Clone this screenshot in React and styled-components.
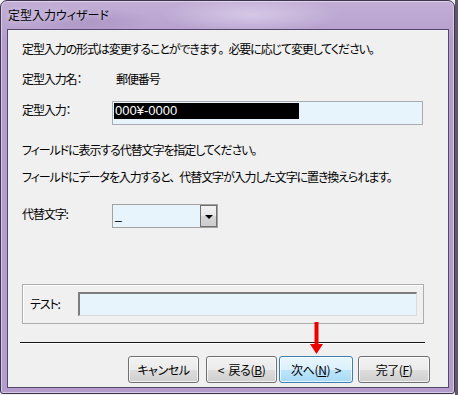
import React from 'react'
import styled, { createGlobalStyle } from 'styled-components'

const GlobalStyle = createGlobalStyle`
  html, body {
    margin: 0;
    padding: 0;
  }
  body {
    width: 458px;
    height: 395px;
    overflow: hidden;
    background: linear-gradient(to right, #f2f2f2 455px, #5f5a68 455px);
    font-family: "Noto Sans CJK JP", "Noto Sans", sans-serif;
    font-size: 12px;
    font-feature-settings: "palt";
    color: #000;
  }
`

const Window = styled.div`
  position: relative;
  box-sizing: border-box;
  width: 455px;
  height: 394px;
  border: 1px solid #3f3350;
  border-radius: 7px 7px 3px 3px;
  background:
    radial-gradient(ellipse 90px 18px at 250px 14px, rgba(235, 225, 245, 0.55), transparent),
    radial-gradient(ellipse 60px 14px at 90px 20px, rgba(150, 125, 175, 0.35), transparent),
    linear-gradient(180deg, rgba(255, 255, 255, 0.18), rgba(255, 255, 255, 0) 40px),
    #b49dcd;
  box-shadow: inset 0 0 0 1px rgba(255, 255, 255, 0.45);
  display: flex;
  flex-direction: column;
`

const TitleBar = styled.div`
  height: 28px;
  line-height: 28px;
  padding-left: 7px;
  font-size: 12px;
  color: #000;
  text-shadow: 0 0 6px rgba(255, 255, 255, 0.7);
`

const Panel = styled.div`
  flex: 1;
  margin: 0 5px 5px 6px;
  border: 1px solid #54486a;
  background: #f0f0f0;
  display: flex;
  flex-direction: column;
  padding-left: 14px;
  letter-spacing: -1.1px;
`

const Line = styled.div`
  margin-top: ${p => p.$top}px;
  height: 16px;
  line-height: 16px;
  white-space: nowrap;
  display: flex;
`

const Punct = styled.span`
  margin-right: 5px;
`

const Label = styled.span`
  display: inline-block;
  width: ${p => p.$width}px;
  flex-shrink: 0;
  padding-top: ${p => p.$pad || 0}px;
  line-height: 16px;
`

const FieldRow = styled.div`
  margin-top: ${p => p.$top}px;
  height: 24px;
  display: flex;
  align-items: flex-start;
`

const TextBox = styled.div`
  box-sizing: border-box;
  width: ${p => p.$width}px;
  height: 24px;
  border: 1px solid #a9abb3;
  background: #e7f4fc;
  padding: 1px 1px;
  display: flex;
`

const Selected = styled.span`
  display: inline-block;
  width: 184px;
  height: 16px;
  line-height: 16px;
  background: #000;
  color: #fff;
  padding-left: 1px;
  letter-spacing: 0;
  font-family: "Liberation Sans", "Noto Sans CJK JP", sans-serif;
  font-size: 13px;
`

const Combo = styled.div`
  box-sizing: border-box;
  width: 106px;
  height: 24px;
  border: 1px solid #a2a2a2;
  background: #e7f4fc;
  display: flex;
  align-items: stretch;
`

const ComboValue = styled.span`
  flex: 1;
  padding-left: 2px;
  line-height: 20px;
  font-family: "Liberation Sans", sans-serif;
`

const DropButton = styled.span`
  box-sizing: border-box;
  width: 17px;
  border: 1px solid #6f6f6f;
  background: linear-gradient(180deg, #f3f3f3 0%, #e6e6e6 50%, #d4d4d4 51%, #cdcdcd 100%);
  display: flex;
  align-items: center;
  justify-content: center;

  &::after {
    content: "";
    border-left: 4px solid transparent;
    border-right: 4px solid transparent;
    border-top: 4px solid #000;
    margin-top: 1px;
  }
`

const Group = styled.div`
  box-sizing: border-box;
  margin-top: ${p => p.$top}px;
  width: 402px;
  height: 40px;
  border: 1px solid #adadad;
  box-shadow: inset 1px 1px 0 #fff;
  display: flex;
  align-items: center;
  padding-left: 7px;
`

const SunkenBox = styled.div`
  box-sizing: border-box;
  width: 339px;
  height: 24px;
  background: #e7f4fc;
  border-top: 2px solid #7d7d7d;
  border-left: 2px solid #7d7d7d;
  border-right: 1px solid #dadada;
  border-bottom: 1px solid #dadada;
`

const Separator = styled.div`
  margin-top: ${p => p.$top}px;
  margin-left: -2px;
  width: 405px;
  height: 1px;
  background: #151515;
  box-shadow: 0 1px 0 #fff;
`

const ButtonRow = styled.div`
  margin-top: ${p => p.$top}px;
  margin-left: 106px;
  display: flex;
`

const Button = styled.div`
  box-sizing: border-box;
  width: ${p => p.$width}px;
  margin-left: ${p => p.$gap || 0}px;
  height: 27px;
  border: 1px solid ${p => (p.$focused ? '#3c7fb1' : '#707070')};
  border-radius: 3px;
  background: ${p =>
    p.$focused
      ? 'linear-gradient(180deg, #eaf6fd 0%, #d9f0fc 50%, #bee6fd 51%, #a7d9f5 100%)'
      : 'linear-gradient(180deg, #f2f2f2 0%, #ebebeb 50%, #dddddd 51%, #cfcfcf 100%)'};
  box-shadow: inset 0 0 0 1px rgba(255, 255, 255, 0.7);
  display: flex;
  align-items: center;
  justify-content: center;
  line-height: 16px;
  white-space: pre;
  letter-spacing: -0.4px;

  u {
    text-decoration: underline;
    text-underline-offset: 1px;
  }
`

const Arrow = styled.svg`
  position: absolute;
  left: 308px;
  top: 321px;
`

export default function App() {
  return (
    <>
      <GlobalStyle />
      <Window>
        <TitleBar>定型入力ウィザード</TitleBar>
        <Panel>
          <Line $top={11}>
            定型入力の形式は変更することができます<Punct>。</Punct>必要に応じて変更してください。
          </Line>
          <Line $top={14}>
            <Label $width={94}>定型入力名：</Label>
            <span>郵便番号</span>
          </Line>
          <FieldRow $top={14}>
            <Label $width={90} $pad={1}>定型入力：</Label>
            <TextBox $width={311}>
              <Selected>000¥-0000</Selected>
            </TextBox>
          </FieldRow>
          <Line $top={17}>フィールドに表示する代替文字を指定してください。</Line>
          <Line $top={11}>
            フィールドにデータを入力すると<Punct>、</Punct>代替文字が入力した文字に置き換えられます。
          </Line>
          <FieldRow $top={19}>
            <Label $width={90} $pad={2}>代替文字:</Label>
            <Combo>
              <ComboValue>_</ComboValue>
              <DropButton />
            </Combo>
          </FieldRow>
          <Group $top={56}>
            <Label $width={48}>テスト:</Label>
            <SunkenBox />
          </Group>
          <Separator $top={18} />
          <ButtonRow $top={13}>
            <Button $width={71}>キャンセル</Button>
            <Button $width={71} $gap={7}>{'<  '}戻る(<u>B</u>)</Button>
            <Button $width={74} $gap={2} $focused>次へ(<u>N</u>){'  >'}</Button>
            <Button $width={72} $gap={5}>完了(<u>F</u>)</Button>
          </ButtonRow>
        </Panel>
        <Arrow width="15" height="33" viewBox="0 0 15 33">
          <rect x="5.5" y="0" width="4" height="24" fill="#ee0000" />
          <polygon points="1,22 14,22 7.5,32" fill="#ee0000" />
        </Arrow>
      </Window>
    </>
  )
}
